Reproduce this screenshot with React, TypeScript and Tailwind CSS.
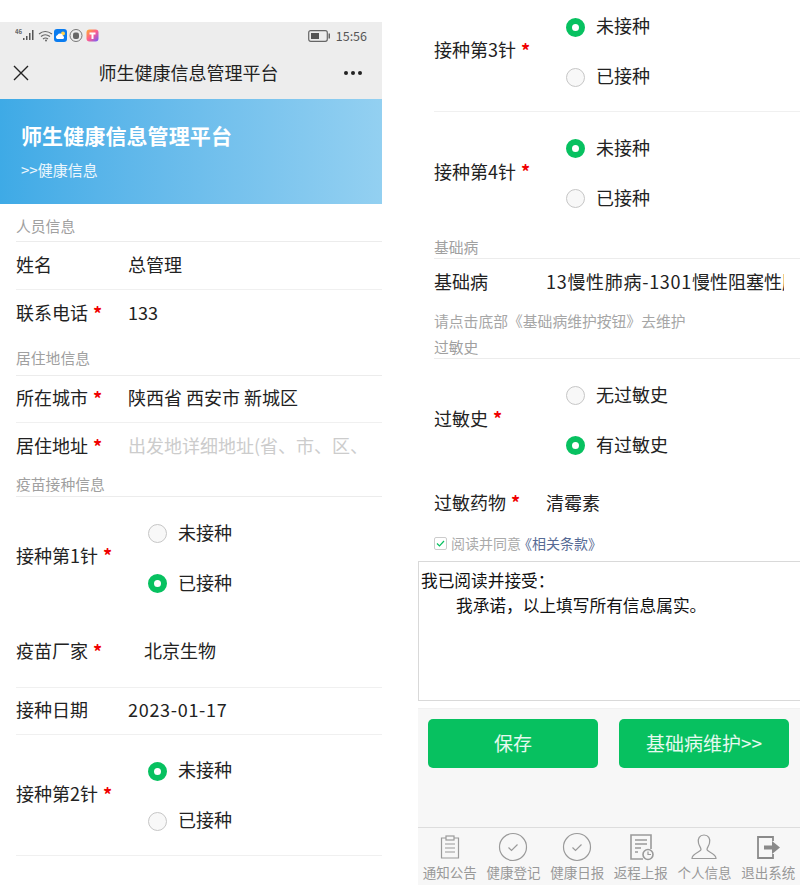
import React from "react";

const font = { fontFamily: '"Noto Sans CJK SC", "Noto Sans", sans-serif' };

function Section({ text, cls }: { text: string; cls: string }) {
  return (
    <div className={`flex items-end border-b border-[#ececec] text-[14.8px] leading-5 text-[#a0a0a0] ${cls}`}>
      {text}
    </div>
  );
}

function Star() {
  return <span className="ml-[5px] text-[18px] font-bold leading-none text-[#f00000]">*</span>;
}

function Row({
  label,
  star,
  value,
  h,
  line,
  labelW = "w-[112px]",
  valueCls = "text-[#222222]",
  pb = "pb-[3px]",
}: {
  label: string;
  star?: boolean;
  value: React.ReactNode;
  h: string;
  line?: boolean;
  labelW?: string;
  valueCls?: string;
  pb?: string;
}) {
  return (
    <div className={`flex items-center overflow-hidden whitespace-nowrap text-[18px] ${h} ${pb} ${line ? "border-b border-[#f0f0f0]" : ""}`}>
      <div className={`flex shrink-0 items-center text-[#222222] ${labelW}`}>
        {label}
        {star && <Star />}
      </div>
      <div className={valueCls}>{value}</div>
    </div>
  );
}

function Radio({ on, text }: { on: boolean; text: string }) {
  return (
    <div className="flex h-[50px] items-center">
      <span
        className={
          on
            ? "h-[19px] w-[19px] rounded-full border-[6px] border-[#07c160] bg-white"
            : "h-[19px] w-[19px] rounded-full border border-[#c6c6c6] bg-[#f8f8f8]"
        }
      />
      <span className="ml-[11px] pb-[3px] text-[18px] text-[#222222]">{text}</span>
    </div>
  );
}

function RadioRow({
  label,
  first,
  line,
  cls = "",
  labelCls = "pb-[3px]",
  opts = ["未接种", "已接种"],
}: {
  label: string;
  first: boolean;
  line?: boolean;
  cls?: string;
  labelCls?: string;
  opts?: string[];
}) {
  return (
    <div className={`flex h-[121px] items-center ${line ? "border-b border-[#f0f0f0]" : ""} ${cls}`}>
      <div className={`flex w-[132px] shrink-0 items-center text-[18px] text-[#222222] ${labelCls}`}>
        {label}
        <Star />
      </div>
      <div className="pt-[2px]">
        <Radio on={first} text={opts[0]} />
        <Radio on={!first} text={opts[1]} />
      </div>
    </div>
  );
}

function StatusIcons() {
  return (
    <svg width="84" height="16" viewBox="0 0 84 16" className="block">
      <text x="0" y="6" fontSize="6" fontWeight="700" fill="#666">46</text>
      <rect x="8" y="10" width="1.5" height="2" fill="#555" />
      <rect x="11" y="8" width="1.5" height="4" fill="#555" />
      <rect x="14" y="5" width="1.5" height="7" fill="#555" />
      <rect x="17" y="2" width="1.5" height="10" fill="#555" />
      <path d="M24 6 Q30 1 37 6 M26 8.5 Q30 5 35 8.5 M28 11 Q30.500 9 33 11" fill="none" stroke="#666" strokeWidth="1.200" />
      <circle cx="31" cy="12.500" r="1" fill="#666" />
      <rect x="39" y="1" width="13" height="13" rx="3" fill="#0a7cf0" />
      <circle cx="48" cy="5.500" r="2" fill="#ffd24d" />
      <path d="M42 11 a2.200 2.200 0 0 1 0.500 -4 a3 3 0 0 1 5.500 1 a1.600 1.600 0 0 1 0 3z" fill="#fff" />
      <circle cx="61" cy="7.500" r="6" fill="none" stroke="#777" strokeWidth="1" />
      <rect x="58" y="4.500" width="6" height="6.500" rx="2" fill="#666" />
      <defs>
        <linearGradient id="mix" x1="0" y1="0" x2="1" y2="1">
          <stop offset="0" stopColor="#ffb02e" />
          <stop offset="0.5" stopColor="#ff5d8f" />
          <stop offset="1" stopColor="#6a5cff" />
        </linearGradient>
      </defs>
      <rect x="71.500" y="1.500" width="12" height="12" rx="3" fill="url(#mix)" />
      <path d="M74.500 4.500 h6 v2 h-2 v4.500 h-2 v-4.500 h-2z" fill="#fff" />
    </svg>
  );
}

const stroke = { fill: "none", stroke: "#9a9a9a", strokeWidth: 1.2 };

function TabIcon({ kind }: { kind: number }) {
  return (
    <svg width="30" height="30" viewBox="0 0 30 30" className="block">
      {kind === 0 && (
        <g {...stroke}>
          <path d="M11 6 H6.500 V26 H23.500 V6 H19" />
          <rect x="11" y="4" width="8" height="4" />
          <path d="M10 12 H20 M10 16 H20 M10 20 H20" />
        </g>
      )}
      {(kind === 1 || kind === 2) && (
        <g {...stroke}>
          <circle cx="15" cy="15" r="13.500" />
          <path d="M10.500 15.500 L13.500 18.500 L19.500 12.500" />
        </g>
      )}
      {kind === 3 && (
        <g {...stroke}>
          <path d="M17 27 H5 V3 H25 V17" strokeWidth="1.600" />
          <path d="M9 8 H21 M9 12 H21 M9 16 H15 M9 20 H12" strokeWidth="1.600" />
          <circle cx="22" cy="22.500" r="5" strokeWidth="1.600" />
          <path d="M22 19.500 V22.500 H25" />
        </g>
      )}
      {kind === 4 && (
        <path
          d="M15 3 C10.500 3 8.500 6.500 9.500 11 C10 14 12 15.500 12 17.500 C12 20 3 21 3 26.500 H27 C27 21 18 20 18 17.500 C18 15.500 20 14 20.500 11 C21.500 6.500 19.500 3 15 3 Z"
          {...stroke}
        />
      )}
      {kind === 5 && (
        <g>
          <path d="M20 9 V5 H5 V26 H20 V22" fill="none" stroke="#8a8a8a" strokeWidth="1.800" />
          <path d="M11 13.500 H19 V9 L27 15.500 L19 22 V17.500 H11 Z" fill="#8a8a8a" />
        </g>
      )}
    </svg>
  );
}

const tabs = ["通知公告", "健康登记", "健康日报", "返程上报", "个人信息", "退出系统"];

export default function App() {
  return (
    <div className="flex h-[886px] w-[800px] items-start overflow-hidden bg-white" style={font}>
      <div className="mt-[22px] w-[382px] shrink-0">
        <div className="bg-[#ededed]">
          <div className="flex h-[28px] items-center justify-between pl-[15px] pr-[15px]">
            <StatusIcons />
            <div className="flex items-center text-[12.500px] text-[#555555]">
              <svg width="23" height="14" viewBox="0 0 23 14" className="mr-[5px] block">
                <rect x="0.700" y="1.700" width="18.600" height="10.600" rx="2" fill="none" stroke="#666" strokeWidth="1.200" />
                <rect x="3" y="4" width="8" height="6" fill="#555" />
                <rect x="20.500" y="4.500" width="1.500" height="5" fill="#666" />
              </svg>
              15:56
            </div>
          </div>
          <div className="flex h-[49px] items-center justify-between px-[13px] pb-[3px]">
            <svg width="16" height="16" viewBox="0 0 16 16" className="block">
              <path d="M1 1 L15 15 M15 1 L1 15" stroke="#222" strokeWidth="1.400" />
            </svg>
            <div className="ml-[4px] pb-[1px] text-[18px] text-[#222222]">师生健康信息管理平台</div>
            <div className="flex gap-[3px] pr-[7px]">
              <span className="h-[4px] w-[4px] rounded-full bg-[#222222]" />
              <span className="h-[4px] w-[4px] rounded-full bg-[#222222]" />
              <span className="h-[4px] w-[4px] rounded-full bg-[#222222]" />
            </div>
          </div>
        </div>
        <div className="h-[105px] bg-gradient-to-r from-[#3eaae6] to-[#93d0f1] pl-[21px] pt-[21px] text-white">
          <div className="text-[21px] font-bold leading-[30px] tracking-[0.1px]">师生健康信息管理平台</div>
          <div className="mt-[10px] text-[15px] leading-5 text-white/90">&gt;&gt;健康信息</div>
        </div>
        <div className="pl-[16px]">
          <Section text="人员信息" cls="h-[38px] pb-[5px]" />
          <Row label="姓名" value="总管理" h="h-[48px]" line />
          <Row label="联系电话" star value="133" h="h-[48px]" />
          <Section text="居住地信息" cls="h-[38px] pb-[7px]" />
          <Row label="所在城市" star value="陕西省 西安市 新城区" h="h-[47px]" line />
          <Row label="居住地址" star value="出发地详细地址(省、市、区、" h="h-[47px]" valueCls="text-[#cccccc]" pb="pb-[2px]" />
          <Section text="疫苗接种信息" cls="h-[27px] pb-[2px]" />
          <RadioRow label="接种第1针" first={false} cls="h-[120px]" labelCls="pb-[5px]" />
          <Row label="疫苗厂家" star value="北京生物" h="h-[70px]" line labelW="w-[128px]" pb="pb-[4px]" />
          <Row label="接种日期" value="2023-01-17" h="h-[47px]" line valueCls="text-[#222222] tracking-[0.7px]" pb="pb-[4px]" />
          <RadioRow label="接种第2针" first line />
        </div>
      </div>

      <div className="ml-[36px] w-[382px] shrink-0">
        <div className="-mt-[9px] pl-[16px]">
          <RadioRow label="接种第3针" first line />
          <RadioRow label="接种第4针" first />
          <Section text="基础病" cls="h-[26px] pb-[1px]" />
          <Row
            label="基础病"
            value={
              <>
                <span className="tracking-[0.7px]">13慢性肺病-1301</span>慢性阻塞性肺疾病
              </>
            }
            h="h-[47px] pr-[16px]"
            valueCls="overflow-hidden text-[#222222]"
            pb="pb-[2px]"
          />
          <div className="flex h-[30px] items-center text-[14.800px] text-[#a6a6a6]">请点击底部《基础病维护按钮》去维护</div>
          <Section text="过敏史" cls="h-[23px] pb-[1px]" />
          <RadioRow label="过敏史" first={false} opts={["无过敏史", "有过敏史"]} />
          <Row label="过敏药物" star value="清霉素" h="h-[46px]" pb="pb-[2px]" />
          <div className="flex h-[35px] items-center text-[14px] text-[#aaaaaa]">
            <span className="mr-[4px] flex h-[13px] w-[13px] items-center justify-center rounded-[2px] border border-[#cccccc]">
              <svg width="9" height="9" viewBox="0 0 9 9" className="block">
                <path d="M1 4.500 L3.500 7 L8 2" fill="none" stroke="#07c160" strokeWidth="1.200" />
              </svg>
            </span>
            阅读并同意<span className="-ml-[3px] text-[#576b95]">《相关条款》</span>
          </div>
        </div>
        <div className="h-[140px] whitespace-pre-wrap border border-r-0 border-[#d9d9d9] pl-[2px] pt-[6px] text-[16.700px] leading-[25px] text-[#111111]">
          我已阅读并接受：
          <div className="pl-[35px]">我承诺，以上填写所有信息属实。</div>
        </div>
        <div className="mt-[7px] h-[119px] border-t border-[#f1f1f1] bg-[#f7f7f7] pl-[10px] pt-[10px]">
          <div className="flex gap-[21px]">
            <div className="flex h-[49px] w-[170px] items-center justify-center rounded-[5px] bg-[#07c160] text-[19px] text-white/90">保存</div>
            <div className="flex h-[49px] w-[170px] items-center justify-center rounded-[5px] bg-[#07c160] text-[19px] text-white/90">基础病维护&gt;&gt;</div>
          </div>
        </div>
        <div className="grid h-[58px] grid-cols-6 border-t border-[#dddddd] bg-[#f7f7f7]">
          {tabs.map((t, i) => (
            <div key={t} className="flex flex-col items-center pt-[4px]">
              <TabIcon kind={i} />
              <div className="mt-[1px] whitespace-nowrap text-[13.500px] leading-[18px] text-[#999999]">{t}</div>
            </div>
          ))}
        </div>
      </div>
    </div>
  );
}
